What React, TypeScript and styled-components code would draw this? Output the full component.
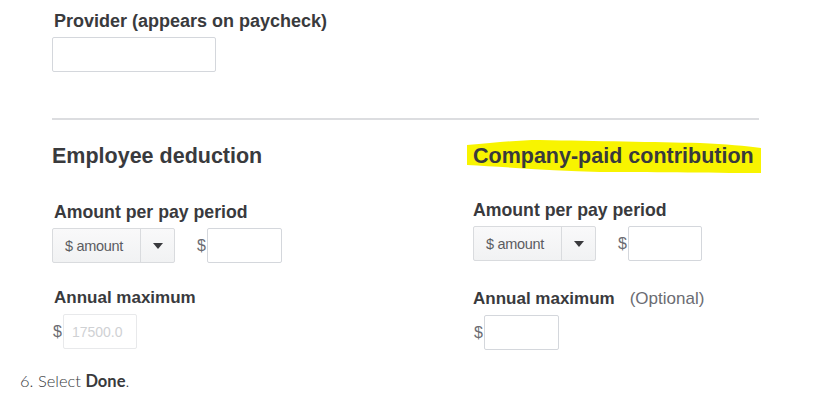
import styled, {createGlobalStyle} from 'styled-components';

const GlobalStyle = createGlobalStyle`
  body {
    margin: 0;
    background: #fff;
    font-family: "Liberation Sans", Arial, sans-serif;
    color: #393a3d;
  }
`;

const Page = styled.div`
  width: 820px;
  height: 415px;
  overflow: hidden;
  position: relative;
`;

const Form = styled.div`
  padding: 10px 0 0 52px;
  width: 707px;
`;

const Field = styled.div<{ $top?: number }>`
  display: flex;
  flex-direction: column;
  align-items: flex-start;
  margin-top: ${(p) => p.$top ?? 0}px;
`;

const Label = styled.label<{ $size: number; $indent?: number }>`
  font-size: ${(p) => p.$size}px;
  font-weight: bold;
  line-height: 22px;
  padding-left: ${(p) => p.$indent ?? 2}px;
  margin-bottom: 5px;
  color: #393a3d;
  white-space: nowrap;
`;

const Optional = styled.span`
  font-weight: normal;
  color: #6b6c72;
  margin-left: 15px;
`;

const TextInput = styled.input<{ $width: number }>`
  box-sizing: border-box;
  width: ${(p) => p.$width}px;
  height: 35px;
  border: 1px solid #d4d7dc;
  border-radius: 2px;
  font-family: "Liberation Sans", Arial, sans-serif;
  font-size: 14px;
  padding: 0 8px;
  outline: none;
  &::placeholder {
    color: #cfd1d4;
  }
  &:disabled {
    background: #fff;
    border-color: #e8e9eb;
  }
`;

const Rule = styled.hr`
  margin: 46px 0 0;
  border: none;
  border-top: 2px solid #dcdde0;
`;

const Columns = styled.div`
  display: grid;
  grid-template-columns: 421px 1fr;
`;

const Column = styled.div`
  display: flex;
  flex-direction: column;
`;

const HeadingWrap = styled.div`
  position: relative;
  margin-top: 21px;
  height: 30px;
`;

const Heading = styled.h2`
  position: relative;
  margin: 0;
  font-size: 21.5px;
  line-height: 30px;
  font-weight: bold;
  color: #393a3d;
  white-space: nowrap;
`;

const Highlight = styled.svg`
  position: absolute;
  left: -7px;
  top: -3px;
`;

const Row = styled.div`
  display: flex;
  align-items: center;
`;

const Select = styled.div`
  box-sizing: border-box;
  display: flex;
  width: 123px;
  height: 35px;
  border: 1px solid #d9dbde;
  border-radius: 2px;
  background: linear-gradient(#f9f9fa, #f1f2f3);
  font-size: 14.5px;
  color: #5b5c61;
`;

const SelectText = styled.span`
  flex: 1;
  display: flex;
  align-items: center;
  padding-left: 12px;
  border-right: 1px solid #d9dbde;
  letter-spacing: -0.3px;
`;

const Caret = styled.span`
  width: 33px;
  display: flex;
  align-items: center;
  justify-content: center;
`;

const Dollar = styled.span<{ $gap: number }>`
  font-size: 16px;
  color: #6b6c72;
  margin: 0 1px 0 ${(p) => p.$gap}px;
`;

const Step = styled.p`
  margin: 21px 0 0 20px;
  font-family: Lato, "Noto Sans", sans-serif;
  font-size: 16.5px;
  font-weight: 300;
  color: #393a3d;
  b {
    font-weight: bold;
  }
`;

const CaretIcon = () => (
  <svg width="10" height="6" viewBox="0 0 10 6">
    <path d="M0 0h10L5 6z" fill="#393a3d" />
  </svg>
);

export default function App() {
  return (
    <>
      <GlobalStyle />
      <Page>
        <Form>
          <Field>
            <Label $size={18}>Provider (appears on paycheck)</Label>
            <TextInput $width={164} />
          </Field>
          <Rule />
          <Columns>
            <Column>
              <HeadingWrap>
                <Heading>Employee deduction</Heading>
              </HeadingWrap>
              <Field $top={30}>
                <Label $size={17.7}>Amount per pay period</Label>
                <Row>
                  <Select>
                    <SelectText>$ amount</SelectText>
                    <Caret><CaretIcon /></Caret>
                  </Select>
                  <Dollar $gap={22}>$</Dollar>
                  <TextInput $width={75} />
                </Row>
              </Field>
              <Field $top={24}>
                <Label $size={17}>Annual maximum</Label>
                <Row>
                  <Dollar $gap={1}>$</Dollar>
                  <TextInput $width={74} placeholder="17500.0" disabled />
                </Row>
              </Field>
            </Column>
            <Column>
              <HeadingWrap>
                <Highlight width="296" height="37" viewBox="0 0 296 37">
                  <path
                    d="M1 7 C30 5 50 2 74 2 C130 3 190 4 234 5 C260 6 280 8 295 10 L295 35 C240 35 180 34 134 34 C90 33 40 29 1 27 Z"
                    fill="#f8f400"
                  />
                </Highlight>
                <Heading>Company-paid contribution</Heading>
              </HeadingWrap>
              <Field $top={28}>
                <Label $size={17.7} $indent={0}>Amount per pay period</Label>
                <Row>
                  <Select>
                    <SelectText>$ amount</SelectText>
                    <Caret><CaretIcon /></Caret>
                  </Select>
                  <Dollar $gap={22}>$</Dollar>
                  <TextInput $width={74} />
                </Row>
              </Field>
              <Field $top={27}>
                <Label $size={17} $indent={0}>
                  Annual maximum<Optional>(Optional)</Optional>
                </Label>
                <Row>
                  <Dollar $gap={1}>$</Dollar>
                  <TextInput $width={75} />
                </Row>
              </Field>
            </Column>
          </Columns>
        </Form>
        <Step>6. Select <b>Done</b>.</Step>
      </Page>
    </>
  );
}
